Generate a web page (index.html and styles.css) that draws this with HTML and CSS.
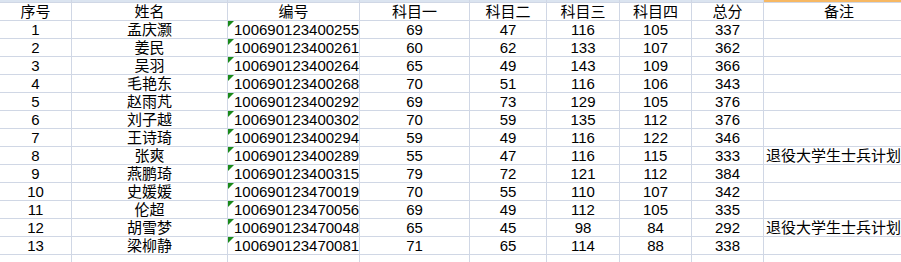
FILE: index.html
```html
<!DOCTYPE html>
<html lang="zh-CN">
<head>
<meta charset="utf-8">
<title>成绩表</title>
<link rel="stylesheet" href="styles.css">
</head>
<body>
<div class="sheet">
  <div class="strip"></div><div class="strip"></div><div class="strip"></div><div class="strip"></div><div class="strip"></div><div class="strip"></div><div class="strip"></div><div class="strip"></div><div class="strip sel"></div>

  <div class="c">序号</div><div class="c">姓名</div><div class="c">编号</div><div class="c">科目一</div><div class="c">科目二</div><div class="c">科目三</div><div class="c">科目四</div><div class="c">总分</div><div class="c">备注</div>

  <div class="c">1</div><div class="c">孟庆灏</div><div class="id">100690123400255</div><div class="c">69</div><div class="c">47</div><div class="c">116</div><div class="c">105</div><div class="c">337</div><div class="l"></div>
  <div class="c">2</div><div class="c">姜民</div><div class="id">100690123400261</div><div class="c">60</div><div class="c">62</div><div class="c">133</div><div class="c">107</div><div class="c">362</div><div class="l"></div>
  <div class="c">3</div><div class="c">吴羽</div><div class="id">100690123400264</div><div class="c">65</div><div class="c">49</div><div class="c">143</div><div class="c">109</div><div class="c">366</div><div class="l"></div>
  <div class="c">4</div><div class="c">毛艳东</div><div class="id">100690123400268</div><div class="c">70</div><div class="c">51</div><div class="c">116</div><div class="c">106</div><div class="c">343</div><div class="l"></div>
  <div class="c">5</div><div class="c">赵雨芃</div><div class="id">100690123400292</div><div class="c">69</div><div class="c">73</div><div class="c">129</div><div class="c">105</div><div class="c">376</div><div class="l"></div>
  <div class="c">6</div><div class="c">刘子越</div><div class="id">100690123400302</div><div class="c">70</div><div class="c">59</div><div class="c">135</div><div class="c">112</div><div class="c">376</div><div class="l"></div>
  <div class="c">7</div><div class="c">王诗琦</div><div class="id">100690123400294</div><div class="c">59</div><div class="c">49</div><div class="c">116</div><div class="c">122</div><div class="c">346</div><div class="l"></div>
  <div class="c">8</div><div class="c">张爽</div><div class="id">100690123400289</div><div class="c">55</div><div class="c">47</div><div class="c">116</div><div class="c">115</div><div class="c">333</div><div class="l">退役大学生士兵计划</div>
  <div class="c">9</div><div class="c">燕鹏琦</div><div class="id">100690123400315</div><div class="c">79</div><div class="c">72</div><div class="c">121</div><div class="c">112</div><div class="c">384</div><div class="l"></div>
  <div class="c">10</div><div class="c">史媛媛</div><div class="id">100690123470019</div><div class="c">70</div><div class="c">55</div><div class="c">110</div><div class="c">107</div><div class="c">342</div><div class="l"></div>
  <div class="c">11</div><div class="c">伦超</div><div class="id">100690123470056</div><div class="c">69</div><div class="c">49</div><div class="c">112</div><div class="c">105</div><div class="c">335</div><div class="l"></div>
  <div class="c">12</div><div class="c">胡雪梦</div><div class="id">100690123470048</div><div class="c">65</div><div class="c">45</div><div class="c">98</div><div class="c">84</div><div class="c">292</div><div class="l">退役大学生士兵计划</div>
  <div class="c">13</div><div class="c">梁柳静</div><div class="id">100690123470081</div><div class="c">71</div><div class="c">65</div><div class="c">114</div><div class="c">88</div><div class="c">338</div><div class="l"></div>

  <div class="c"></div><div class="c"></div><div class="c"></div><div class="c"></div><div class="c"></div><div class="c"></div><div class="c"></div><div class="c"></div><div class="l"></div>
</div>
</body>
</html>
```

FILE: styles.css
```css
html, body {
  margin: 0;
  padding: 0;
  background: #ffffff;
  overflow: hidden;
}

.sheet {
  display: grid;
  grid-template-columns: 71px 155px 131px 109px 76px 72px 71px 71px 150px;
  grid-template-rows: 2px;
  grid-auto-rows: 17px;
  gap: 1px;
  width: 913px;
  background: #d0d7e5;
  font-family: "Liberation Sans", "Noto Sans CJK SC", sans-serif;
  font-size: 15px;
  color: #000000;
}

.sheet > div {
  background: #ffffff;
  line-height: 17px;
  white-space: nowrap;
  overflow: visible;
}

.sheet > .strip {
  background: #dbe4f0;
}

.sheet > .strip.sel {
  background: #f7b863;
}

.c {
  text-align: center;
}

.l {
  text-align: left;
  padding-left: 2px;
}

.id {
  position: relative;
  text-align: left;
  padding-left: 6px;
}

.id::before {
  content: "";
  position: absolute;
  left: 0;
  top: 0;
  width: 0;
  height: 0;
  border-top: 6px solid #1a8a1a;
  border-right: 6px solid transparent;
}
```
